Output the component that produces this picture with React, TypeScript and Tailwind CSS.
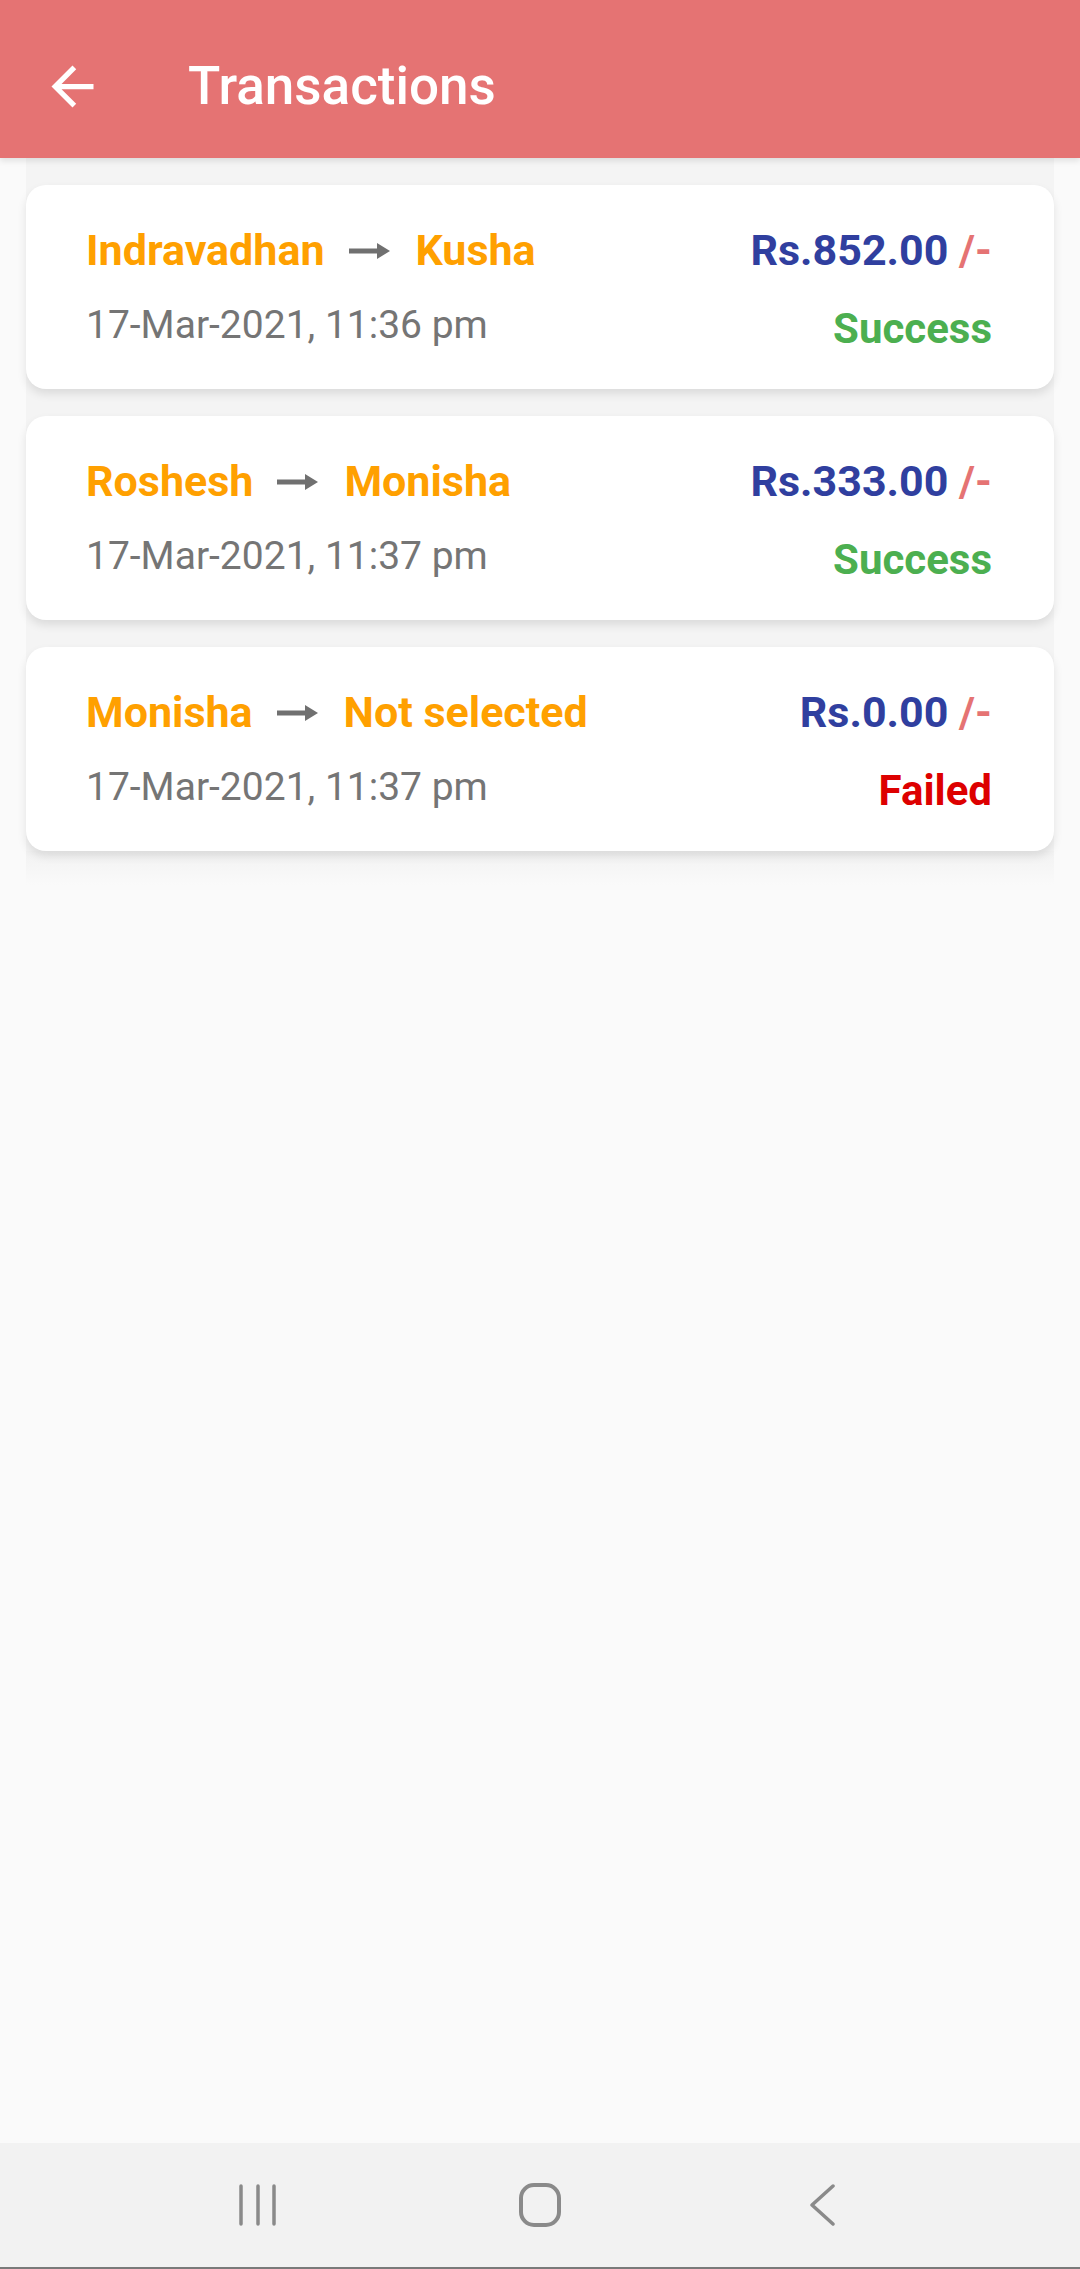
import React from "react";

type Transaction = {
    from: string;
    to: string;
    date: string;
    amount: string;
    status: "Success" | "Failed";
};

const transactions: Transaction[] = [
    {from: "Indravadhan", to: "Kusha", date: "17-Mar-2021, 11:36 pm", amount: "Rs.852.00", status: "Success"},
    {from: "Roshesh", to: "Monisha", date: "17-Mar-2021, 11:37 pm", amount: "Rs.333.00", status: "Success"},
    {from: "Monisha", to: "Not selected", date: "17-Mar-2021, 11:37 pm", amount: "Rs.0.00", status: "Failed"},
];

const RightArrow = () => (
    <svg width="41" height="16" viewBox="0 0 41 16" className="ml-[24px] mr-[26px]">
        <rect x="0" y="5.5" width="30" height="5" fill="#707070"/>
        <path d="M28 0 L41 8 L28 16 Z" fill="#707070"/>
    </svg>
);

function TransactionCard({tx}: {tx: Transaction}) {
    return (
        <div className="h-[204px] bg-white rounded-[20px] shadow-[0_5px_10px_rgba(0,0,0,0.10)] pr-[62px] pl-[60px] pt-[41px] flex justify-between">
            <div className="flex flex-col">
                <div className="flex items-center h-[49px] text-[43px] leading-[49px] font-bold text-[#FFA000]">
                    <span>{tx.from}</span>
                    <RightArrow/>
                    <span>{tx.to}</span>
                </div>
                <div className="mt-[27px] text-[39px] leading-[46px] text-[#757575]">{tx.date}</div>
            </div>
            <div className="flex flex-col items-end">
                <div className="text-[43px] leading-[49px] font-bold text-[#303F9F]">
                    {tx.amount} <span className="text-[#E57373]">/-</span>
                </div>
                <div className={`mt-[29px] text-[42px] leading-[49px] font-bold ${tx.status === "Success" ? "text-[#4CAF50]" : "text-[#DD0000]"}`}>
                    {tx.status}
                </div>
            </div>
        </div>
    );
}

export default function App() {
    return (
        <div className="w-[1080px] h-[2269px] flex flex-col bg-[#FAFAFA] font-['Roboto',sans-serif] overflow-hidden">
            {/* App bar */}
            <header className="relative z-10 h-[158px] shrink-0 bg-[#E57373] flex items-center pt-[14px] shadow-[0_3px_6px_rgba(0,0,0,0.10)]">
                <svg width="63" height="63" viewBox="0 0 24 24" className="ml-[41px]" fill="#FFFFFF">
                    <path d="M20 11H7.83l5.59-5.59L12 4l-8 8 8 8 1.41-1.41L7.83 13H20v-2z"/>
                </svg>
                <h1 className="ml-[84px] text-white text-[53px] font-medium leading-none">Transactions</h1>
            </header>

            {/* Transactions list */}
            <main className="flex-1">
                <div className="mx-[26px] bg-[#F4F4F4] pt-[27px] flex flex-col gap-[27px]">
                    {transactions.map((tx, i) => (
                        <TransactionCard key={i} tx={tx}/>
                    ))}
                </div>
                <div className="mx-[26px] h-[34px] bg-gradient-to-b from-[#F2F2F2] to-[#FAFAFA]"/>
            </main>

            {/* Navigation bar */}
            <nav className="h-[126px] shrink-0 bg-[#F2F2F2] border-b-2 border-[#7a7a7a] flex items-center justify-center">
                <div className="w-[282px] flex justify-center">
                    <svg width="40" height="42" viewBox="0 0 40 42" stroke="#8A8A8A" strokeWidth="3.5" strokeLinecap="round">
                        <line x1="3" y1="2" x2="3" y2="40"/>
                        <line x1="20" y1="2" x2="20" y2="40"/>
                        <line x1="36" y1="2" x2="36" y2="40"/>
                    </svg>
                </div>
                <div className="w-[282px] flex justify-center">
                    <svg width="42" height="44" viewBox="0 0 42 44" fill="none" stroke="#8A8A8A" strokeWidth="4">
                        <rect x="2" y="2" width="38" height="40" rx="13"/>
                    </svg>
                </div>
                <div className="w-[282px] flex justify-center">
                    <svg width="26" height="42" viewBox="0 0 26 42" fill="none" stroke="#8A8A8A" strokeWidth="3.5" strokeLinecap="round" strokeLinejoin="round">
                        <path d="M24 2 L3 21 L24 40"/>
                    </svg>
                </div>
            </nav>
        </div>
    );
}
